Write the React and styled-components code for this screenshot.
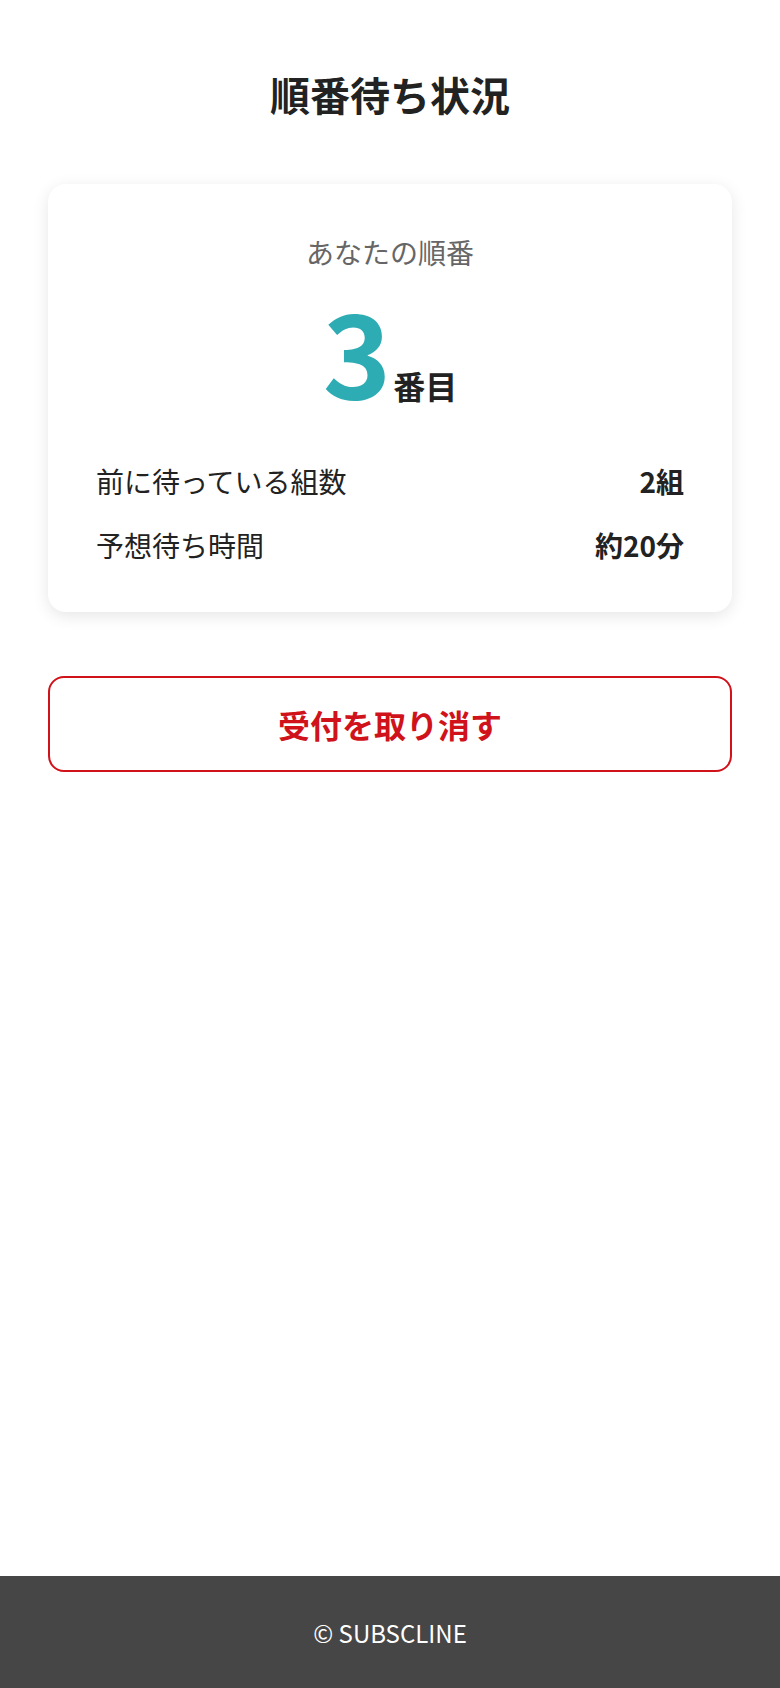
import styled, { createGlobalStyle } from "styled-components";

const GlobalStyle = createGlobalStyle`
  html, body {
    margin: 0;
    padding: 0;
    background: #ffffff;
    font-family: "Noto Sans CJK JP", "Noto Sans", sans-serif;
    color: #222222;
  }
  #root {
    min-height: 100vh;
    display: flex;
    flex-direction: column;
  }
`;

const Page = styled.div`
  flex: 1;
  display: flex;
  flex-direction: column;
  min-height: 100vh;
`;

const Main = styled.main`
  flex: 1;
  padding: 64px 48px 0;
`;

const Title = styled.h1`
  margin: 0 0 60px;
  font-size: 40px;
  line-height: 60px;
  font-weight: 700;
  text-align: center;
  color: #222222;
`;

const Card = styled.section`
  background: #fff;
  border-radius: 18px;
  box-shadow: 0 4px 16px rgba(0, 0, 0, 0.1);
  padding: 47px 48px 46px;
`;

const Label = styled.div`
  font-size: 28px;
  line-height: 42px;
  color: #666666;
  text-align: center;
`;

const Position = styled.div`
  display: flex;
  justify-content: center;
  align-items: baseline;
  margin: 17px 0 52px;
`;

const Number = styled.span`
  font-size: 116px;
  line-height: 1;
  font-weight: 700;
  color: #2eacb4;
`;

const Unit = styled.span`
  font-size: 32px;
  font-weight: 700;
  color: #222222;
  margin-left: 2px;
`;

const Rows = styled.div`
  display: flex;
  flex-direction: column;
  gap: 22px;
`;

const Row = styled.div`
  display: flex;
  justify-content: space-between;
  font-size: 28px;
  line-height: 42px;
`;

const Value = styled.span`
  font-weight: 700;
`;

const CancelButton = styled.button`
  display: block;
  width: 100%;
  height: 96px;
  margin-top: 64px;
  background: #fff;
  border: 2px solid #d0121b;
  border-radius: 16px;
  color: #d0121b;
  font-family: inherit;
  font-size: 32px;
  font-weight: 700;
  cursor: pointer;
`;

const Footer = styled.footer`
  height: 112px;
  background: #464646;
  color: #ffffff;
  display: flex;
  align-items: center;
  justify-content: center;
  font-size: 24px;
`;

export default function App() {
  const rows = [
    { label: "前に待っている組数", value: "2組" },
    { label: "予想待ち時間", value: "約20分" },
  ];

  return (
    <Page>
      <GlobalStyle />
      <Main>
        <Title>順番待ち状況</Title>
        <Card>
          <Label>あなたの順番</Label>
          <Position>
            <Number>3</Number>
            <Unit>番目</Unit>
          </Position>
          <Rows>
            {rows.map((r) => (
              <Row key={r.label}>
                <span>{r.label}</span>
                <Value>{r.value}</Value>
              </Row>
            ))}
          </Rows>
        </Card>
        <CancelButton>受付を取り消す</CancelButton>
      </Main>
      <Footer>© SUBSCLINE</Footer>
    </Page>
  );
}
